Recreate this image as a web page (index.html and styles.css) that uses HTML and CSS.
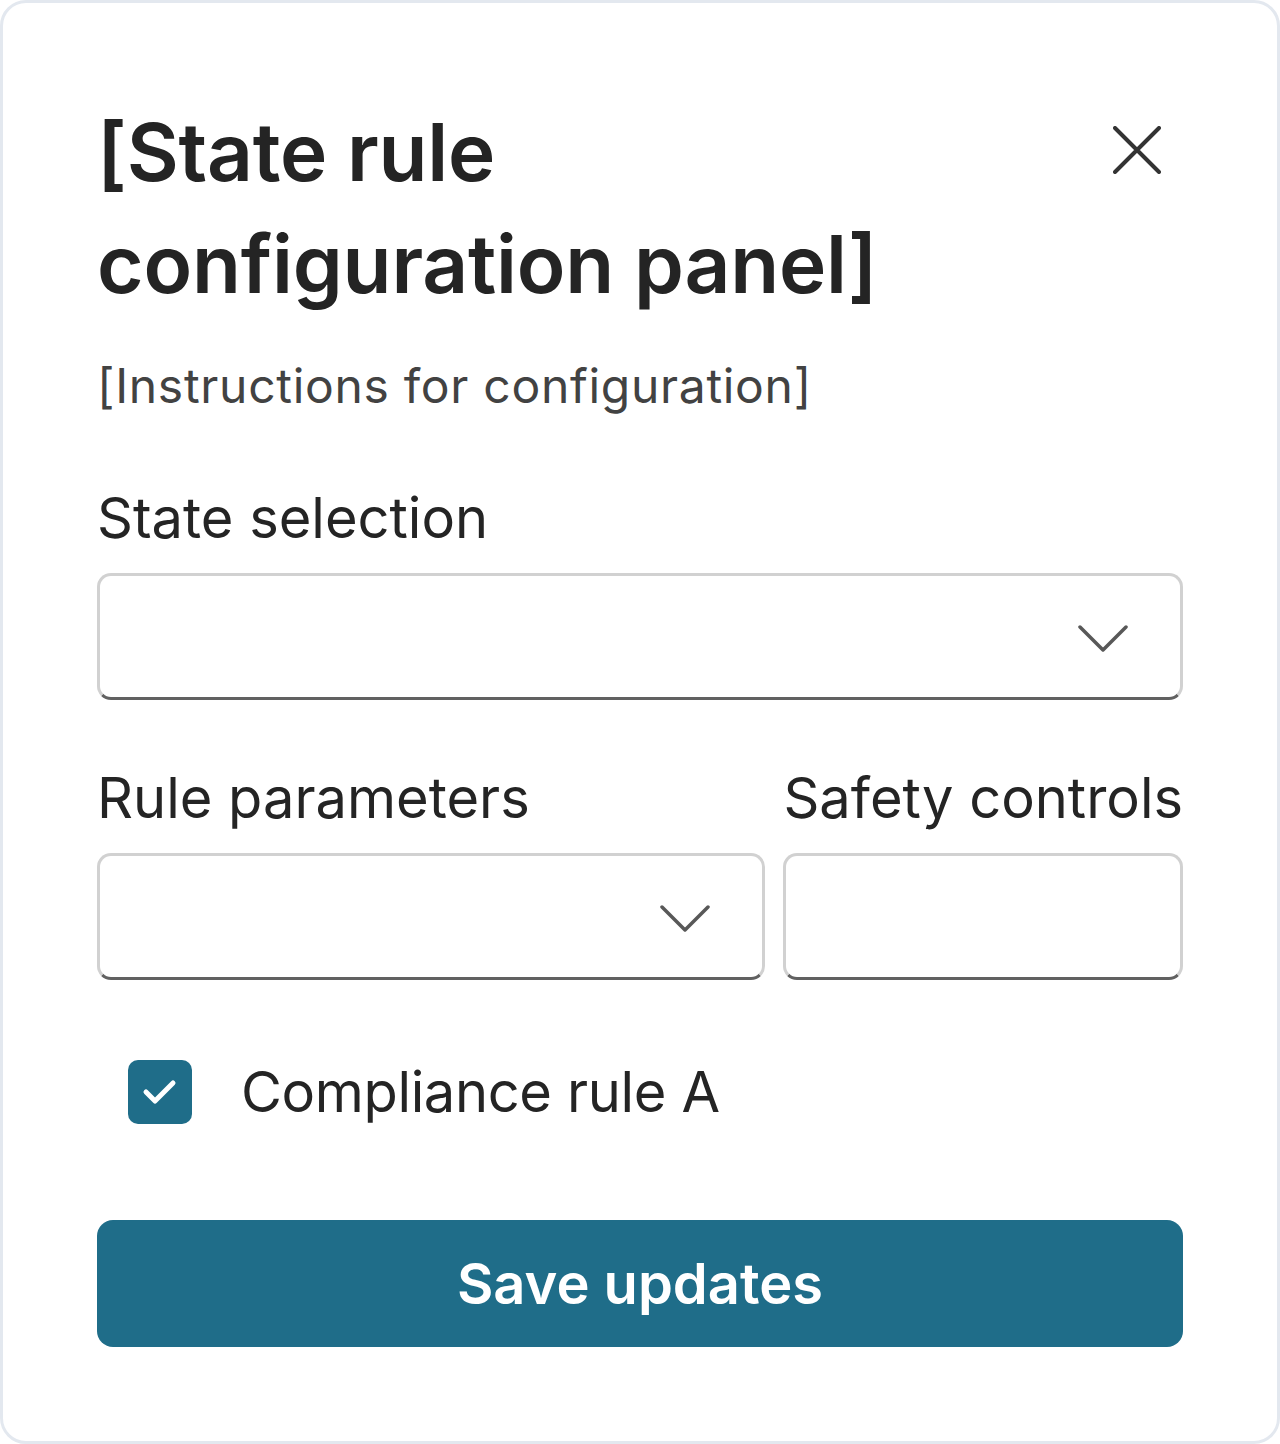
FILE: index.html
```html
<!DOCTYPE html>
<html lang="en">
<head>
<meta charset="utf-8">
<title>State rule configuration panel</title>
<link rel="stylesheet" href="styles.css">
</head>
<body>
<div class="card">
  <div class="header">
    <h1 class="title">[State rule configuration panel]</h1>
    <button class="close" aria-label="Close">
      <svg width="48" height="48" viewBox="0 0 48 48"><path d="M2 2 L46 46 M46 2 L2 46" stroke="#333" stroke-width="4" stroke-linecap="round" fill="none"/></svg>
    </button>
  </div>
  <p class="subtitle">[Instructions for configuration]</p>

  <div class="field first">
    <label class="label">State selection</label>
    <div class="input">
      <svg class="chev" width="52" height="28" viewBox="0 0 52 28"><path d="M3 3 L26 26 L49 3" stroke="#585858" stroke-width="3.5" stroke-linecap="round" stroke-linejoin="round" fill="none"/></svg>
    </div>
  </div>

  <div class="row">
    <div class="field grow">
      <label class="label">Rule parameters</label>
      <div class="input">
        <svg class="chev" width="52" height="28" viewBox="0 0 52 28"><path d="M3 3 L26 26 L49 3" stroke="#585858" stroke-width="3.5" stroke-linecap="round" stroke-linejoin="round" fill="none"/></svg>
      </div>
    </div>
    <div class="field fixed">
      <label class="label">Safety controls</label>
      <div class="input"></div>
    </div>
  </div>

  <div class="check-row">
    <span class="checkbox">
      <svg width="36" height="28" viewBox="0 0 36 28"><path d="M4 14 L13 23 L31 5" stroke="#fff" stroke-width="5" stroke-linecap="round" stroke-linejoin="round" fill="none"/></svg>
    </span>
    <span class="check-label">Compliance rule A</span>
  </div>

  <button class="save">Save updates</button>
</div>
</body>
</html>
```
FILE: styles.css
```css
* { box-sizing: border-box; }
html, body { margin: 0; padding: 0; background: #fff; }
body { font-family: Inter, "Noto Sans", sans-serif; color: #242424; }

.card {
  width: 1280px;
  height: 1444px;
  border: 3px solid #e3e8ef;
  border-radius: 26px;
  padding: 93px 94px 94px 94px;
  display: flex;
  flex-direction: column;
}
.card > * { flex-shrink: 0; }

.header {
  display: flex;
  justify-content: space-between;
  align-items: flex-start;
}
.title {
  margin: 0;
  font-size: 80px;
  line-height: 112px;
  font-weight: 600;
  color: #242424;
  max-width: 900px;
  letter-spacing: -0.2px;
}
.close {
  background: none;
  border: 0;
  padding: 0;
  margin: 30px 22px 0 0;
  width: 48px;
  height: 48px;
  display: flex;
}

.subtitle {
  margin: 34px 0 0 0;
  font-size: 48px;
  line-height: 64px;
  color: #424242;
  letter-spacing: 0.7px;
}

.field { display: flex; flex-direction: column; }
.label {
  font-size: 56px;
  line-height: 80px;
  color: #242424;
  margin-bottom: 15px;
  letter-spacing: 0;
}
.first { margin-top: 60px; }

.input {
  height: 127px;
  border: 3px solid #d1d1d1;
  border-bottom-color: #616161;
  border-radius: 14px;
  background: #fff;
  display: flex;
  align-items: center;
  justify-content: flex-end;
  padding-right: 51px;
}
.chev { margin-top: 2px; }

.row {
  display: flex;
  gap: 18px;
  margin-top: 58px;
}
.grow { flex: 1; }
.fixed { flex: none; }

.check-row {
  display: flex;
  align-items: center;
  margin-top: 72px;
  padding-left: 31px;
  gap: 49px;
}
.checkbox {
  width: 64px;
  height: 64px;
  border-radius: 10px;
  background: #1f6d89;
  display: flex;
  align-items: center;
  justify-content: center;
}
.check-label {
  font-size: 56px;
  line-height: 80px;
  color: #242424;
  letter-spacing: -0.35px;
}

.save {
  margin-top: 88px;
  height: 127px;
  border: 0;
  border-radius: 16px;
  background: #1f6d89;
  color: #fff;
  font-family: Inter, "Noto Sans", sans-serif;
  font-size: 56px;
  font-weight: 600;
  width: 100%;
  padding: 0;
}
```
